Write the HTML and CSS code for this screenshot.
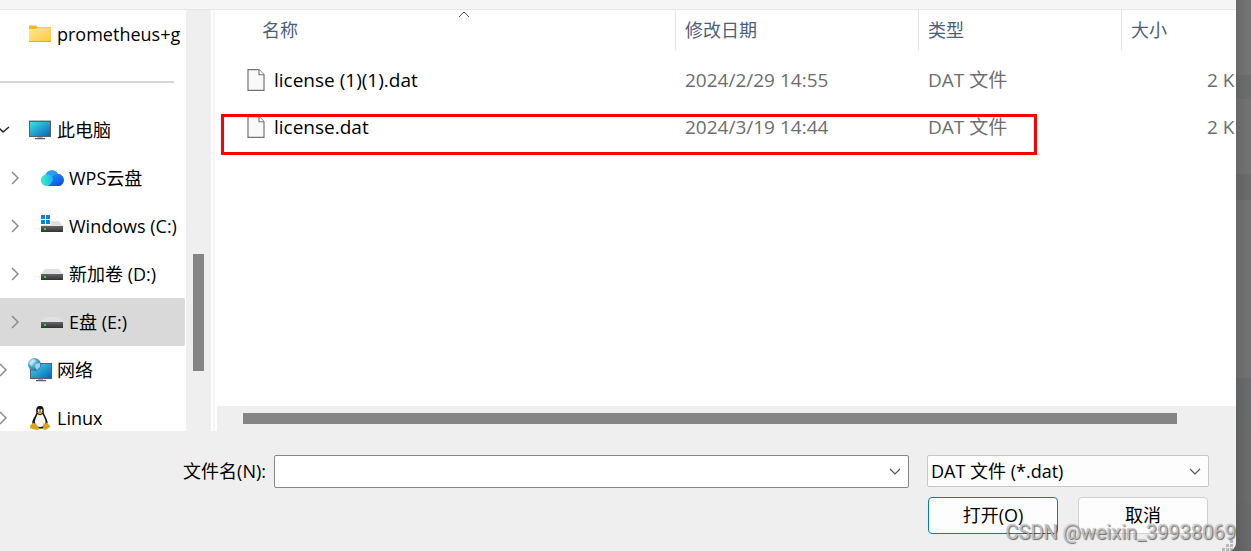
FILE: index.html
```html
<!DOCTYPE html>
<html lang="zh-CN">
<head>
<meta charset="utf-8">
<title>打开</title>
<link rel="stylesheet" href="styles.css">
</head>
<body>
<svg class="defs" aria-hidden="true">
  <defs>
    <linearGradient id="folder" x1="0" y1="0" x2="1" y2="1"><stop offset="0" stop-color="#ffe8a0"/><stop offset="1" stop-color="#ffc83a"/></linearGradient>
    <linearGradient id="screen" x1="0" y1="0" x2="1" y2="1"><stop offset="0" stop-color="#3be0e6"/><stop offset="1" stop-color="#0a63b8"/></linearGradient>
    <linearGradient id="cloud-a" x1="0" y1="0" x2="1" y2="0"><stop offset="0" stop-color="#3df0c0"/><stop offset="1" stop-color="#18b4f5"/></linearGradient>
    <linearGradient id="cloud-b" x1="0" y1="0" x2="1" y2="1"><stop offset="0" stop-color="#1c9cff"/><stop offset="1" stop-color="#0848d8"/></linearGradient>
    <linearGradient id="metal" x1="0" y1="0" x2="0" y2="1"><stop offset="0" stop-color="#666"/><stop offset="1" stop-color="#333"/></linearGradient>
    <radialGradient id="globe" cx=".35" cy=".3" r=".8"><stop offset="0" stop-color="#a8dcf4"/><stop offset=".5" stop-color="#4a9fcc"/><stop offset="1" stop-color="#1d5f96"/></radialGradient>
    <symbol id="chevron" viewBox="0 0 8 14"><path d="M1 1l6 6-6 6" fill="none" stroke="#8a8a8a" stroke-width="1.5"/></symbol>
    <symbol id="down" viewBox="0 0 12 8"><path d="M1 1l5 5 5-5" fill="none" stroke="#555" stroke-width="1.2"/></symbol>
    <symbol id="drive" viewBox="0 0 24 24"><path d="M5 7h14l4 5H1z" fill="#dfe0e3"/><path d="M1 12h22v6H1z" fill="url(#metal)"/><path d="M4 14h2v2H4z" fill="#2be02b"/></symbol>
    <symbol id="file" viewBox="0 0 18 22"><path d="M1 .7h11l5 5v15.600H1z" fill="#f9f9f9" stroke="#747474" stroke-width="1.2"/><path d="M12 .7v5h5" fill="#fff" stroke="#747474" stroke-width="1.100"/></symbol>
  </defs>
</svg>
<div class="screen">
  <main class="dialog">
    <div class="toolbar"></div>
    <div class="browser">
      <nav class="tree">
        <div class="node root"><svg class="icon" viewBox="0 0 24 24"><path d="M1 5V3.500h7L9.500 5H23v15H1z" fill="#f7b51e"/><path d="M1 7h7l2-1.500h13V19.500H1z" fill="url(#folder)"/><path d="M1 19.500h22" stroke="#eaa915"/></svg><span>prometheus+g</span></div>
        <div class="split"><hr></div>
        <div class="node root"><svg class="open" viewBox="0 0 12 8"><path d="M1 2l4 4 6-5" fill="none" stroke="#222" stroke-width="1.500"/></svg><svg class="icon" viewBox="0 0 24 24"><path d="M1 2h22v17H1z" fill="#52616d"/><path d="M1 2h22v1H1z" fill="#b5bec6"/><path d="M2 4h20v14H2z" fill="url(#screen)"/><path d="M9.500 19h5v1h-5z" fill="#aab4bf"/><path d="M7 20h10v1.200H7z" fill="#556"/></svg><span>此电脑</span></div>
        <div class="node"><svg class="chevron"><use href="#chevron"/></svg><svg class="icon" viewBox="0 0 24 24"><path d="M5.500 9.500a6.800 6.800 0 0 1 12.500-1.500 5.800 5.800 0 0 1-.5 12H9z" fill="url(#cloud-b)"/><path d="M5.500 8.800a6.800 6.800 0 0 1 12.500-.8c-4 0-6 3-8 6z" fill="#27a0f8"/><path d="M6.500 8.500c4.500-.5 7 3 6.800 6.500L9.500 19.500l-3 .500A5.700 5.700 0 1 1 6.500 8.500z" fill="url(#cloud-a)"/><path d="M18 8a5.900 5.900 0 0 1-.5 12H8c5.500-1.500 4.500-11 10-12z" fill="url(#cloud-b)"/></svg><span>WPS云盘</span></div>
        <div class="node"><svg class="chevron"><use href="#chevron"/></svg><svg class="icon" viewBox="0 0 24 24"><use href="#drive"/><path d="M0 0h11v11H0z" fill="#fff"/><path d="M1 1h4v4H1zM6 1h4v4H6zM1 6h4v4H1zM6 6h4v4H6z" fill="#0e83d0"/></svg><span>Windows (C:)</span></div>
        <div class="node"><svg class="chevron"><use href="#chevron"/></svg><svg class="icon"><use href="#drive"/></svg><span>新加卷 (D:)</span></div>
        <div class="node selected"><svg class="chevron"><use href="#chevron"/></svg><svg class="icon"><use href="#drive"/></svg><span>E盘 (E:)</span></div>
        <div class="node root"><svg class="chevron edge"><use href="#chevron"/></svg><svg class="icon" viewBox="0 0 24 24"><path d="M2 5h22v16H2z" fill="#52616d"/><path d="M3 6h20v14H3z" fill="url(#screen)"/><path d="M10 21h5v1h-5z" fill="#aab4bf"/><path d="M8 22h10v1.200H8z" fill="#556"/><circle cx="6.500" cy="6.500" r="6.500" fill="url(#globe)"/><path d="M2 3l4-2 2 2-3 2-1 3-3-2zM8 6l4-1v4l-3 3-2-3z" fill="#cbe9f5" opacity=".75"/></svg><span>网络</span></div>
        <div class="node root"><svg class="chevron edge"><use href="#chevron"/></svg><svg class="icon" viewBox="0 0 24 24"><path d="M12 0C8.500 0 8 2.500 8.300 6 8.400 9 5 12 4.300 16c-.5 3 2 6 5 6.500h5.500c3-1 5.500-4 4.700-7-.7-3.500-3.600-6.500-3.800-9.500C16 2.500 15.500 0 12 0z" fill="#151515"/><path d="M9.500 8c1.500 1.500 3.500 1.500 5 0 1 3 3.500 5 3 9-1 3-3 4-5.500 4s-4-1-5-4c-.5-4 2-6 2.500-9z" fill="#f5f5f5"/><ellipse cx="10.700" cy="4.500" rx="1" ry="1.400" fill="#eee"/><ellipse cx="13.400" cy="4.500" rx="1" ry="1.400" fill="#eee"/><path d="M9 6.500l3-1.500 3 1.500-3 2zM5 16.500l3 1.500 3 4c0 2-2 2.300-4 1.500l-4.500-1c-1-.5 0-2-.3-3 0-1 2-1 2.800-3zM19 16l2 3c2 1.500 1 2-.5 3-2 2-5 3-5.500 0l.5-5c1 2 2.500 1 3.500-1z" fill="#dfa414"/></svg><span>Linux</span></div>
      </nav>
      <div class="vscroll"><div class="vthumb"></div></div>
      <div class="divider"></div>
      <section class="files">
        <table>
          <colgroup><col><col class="c-date"><col class="c-type"><col class="c-size"></colgroup>
          <thead><tr>
            <th scope="col"><span class="head first">名称<svg class="sort" viewBox="0 0 12 7"><path d="M1 6l5-5 5 5" fill="none" stroke="#555"/></svg></span></th>
            <th scope="col"><span class="head">修改日期</span></th>
            <th scope="col"><span class="head">类型</span></th>
            <th scope="col"><span class="head last">大小</span></th>
          </tr></thead>
          <tbody>
            <tr><td><span class="name"><svg class="file"><use href="#file"/></svg>license (1)(1).dat</span></td><td>2024/2/29 14:55</td><td>DAT 文件</td><td class="size">2 KB</td></tr>
            <tr><td><span class="name"><svg class="file"><use href="#file"/></svg>license.dat</span></td><td>2024/3/19 14:44</td><td>DAT 文件</td><td class="size">2 KB</td></tr>
          </tbody>
        </table>
        <div class="highlight"></div>
        <div class="hscroll"><div class="hthumb"></div></div>
      </section>
    </div>
    <form class="footer">
      <label for="filename">文件名(N):</label>
      <div class="field"><input id="filename" type="text"><svg class="down"><use href="#down"/></svg></div>
      <div class="field"><select aria-label="文件类型"><option>DAT 文件 (*.dat)</option></select><svg class="down"><use href="#down"/></svg></div>
      <div class="actions"><button type="button" class="primary">打开(O)</button><button type="button">取消</button></div>
      <svg class="grip" viewBox="0 0 12 12"><path d="M8 0h3v3H8zM4 4h3v3H4zM8 4h3v3H8zM0 8h3v3H0zM4 8h3v3H4zM8 8h3v3H8z" fill="#b8b8b8"/></svg>
    </form>
    <div class="watermark">CSDN @weixin_39938069</div>
  </main>
  <div class="backdrop"></div>
</div>
</body>
</html>
```
FILE: styles.css
```css
* { box-sizing: border-box; }
body {
  margin: 0;
  color: #000;
  font: 18px/24px "Open Sans", "Noto Sans CJK SC", sans-serif;
}
svg { display: block; flex: none; }
.defs { position: absolute; width: 0; height: 0; }
.screen { display: flex; height: 100vh; overflow: hidden; background: #5f5f5f; }
.dialog {
  position: relative;
  display: flex;
  flex: 1;
  flex-direction: column;
  min-width: 0;
  overflow: hidden;
  background: #efefef;
  border-radius: 0 0 8px 0;
}
.backdrop {
  width: 15px;
  background: linear-gradient(90deg, #00000018, #0000 12px),
    linear-gradient(#747474 0 75px, #6c6e6d 75px 99px, #727272 99px 174px, #6b6b6b 174px 200px, #727272 200px 378px, #6a6b6c 378px 404px, #686c6b 404px 428px, #6b6b6b 428px 503px, #696969 503px);
}
.toolbar { flex: none; height: 10px; background: #f4f5f7; border-bottom: 1px solid #e5e6e8; }
.browser { display: flex; flex: 1; min-height: 0; background: #fff; }

.tree { flex: none; width: 186px; overflow: hidden; }
.node {
  position: relative;
  display: flex;
  align-items: center;
  gap: 5px;
  height: 48px;
  margin-right: 1px;
  padding-left: 40px;
  border-radius: 0 2px 2px 0;
  white-space: nowrap;
}
.root { padding-left: 28px; margin-right: 0; }
.selected { background: #d9d9d9; }
.icon { width: 24px; height: 24px; }
.chevron { position: absolute; left: 11px; width: 8px; height: 14px; }
.edge { left: -1px; }
.open { position: absolute; left: -2px; width: 12px; height: 8px; }
.split { display: flex; align-items: center; height: 48px; padding-right: 12px; }
.split hr { width: 100%; height: 2px; margin: 0; border: 0; background: #d5d5d5; }
.vscroll { flex: none; width: 25px; padding: 244px 7px 60px; background: #efefef; }
.vthumb { height: 100%; background: #858585; }
.divider { flex: none; width: 6px; border-left: 2px solid #fff; border-right: 2px solid #fff; background: #f5f5f5; }

.files { position: relative; display: flex; flex: 1; flex-direction: column; min-width: 0; }
table { width: 100%; table-layout: fixed; border-collapse: collapse; }
.c-date { width: 243px; }
.c-type { width: 203px; }
.c-size { width: 114px; }
th { height: 46px; padding: 0; vertical-align: top; font-weight: 400; text-align: left; color: #4c607a; }
.head { position: relative; display: flex; align-items: center; height: 40px; padding-left: 9px; border-right: 1px solid #e5e5e5; }
.first { padding-left: 45px; }
.last { border-right: 0; }
.sort { position: absolute; top: 1px; left: 241px; width: 12px; height: 7px; }
td { height: 47px; padding: 0 0 0 9px; overflow: hidden; white-space: nowrap; font-size: 19px; color: #6d6d6d; }
.name { display: flex; align-items: center; gap: 9px; padding-left: 21px; color: #000; }
.file { width: 18px; height: 22px; }
.size { padding-left: 85px; text-overflow: clip; }
.highlight { position: absolute; top: 104px; left: 4px; right: 199px; height: 41px; border: 3px solid #f00; }
.hscroll { height: 25px; margin-top: auto; padding: 7px 59px 7px 26px; background: #efefef; }
.hthumb { height: 11px; background: #858585; }

.footer {
  position: relative;
  flex: none;
  display: grid;
  grid-template-columns: 256px 1fr 282px;
  gap: 9px 18px;
  padding: 24px 27px 17px 0;
}
.footer label { margin-right: -10px; padding-bottom: 2px; align-self: center; text-align: right; }
.field { position: relative; height: 33px; }
input, select, button { font: inherit; color: inherit; background: #fdfdfd; }
input { width: 100%; height: 33px; padding: 0 32px 0 4px; border: 1px solid #858585; border-radius: 2px; background: #fff; }
select { appearance: none; width: 100%; height: 32px; padding: 0 32px 0 3px; border: 1px solid #c8c8c8; border-radius: 2px; }
.down { position: absolute; top: 13px; right: 8px; width: 12px; height: 8px; pointer-events: none; }
.actions { grid-column: 3; display: flex; justify-content: space-between; padding: 0 1px; }
button { width: 130px; height: 37px; padding: 0 0 2px; border: 1px solid #d0d0d0; border-radius: 4px; }
.primary { border-color: #0078d4; }
.grip { position: absolute; right: 2px; bottom: -1px; width: 12px; height: 12px; }
.watermark {
  position: absolute;
  right: 0;
  bottom: 7px;
  color: #e4e4e4b0;
  font: 20px/24px Roboto, sans-serif;
  text-shadow: 1px 1px 1px #0008, 0 0 1px #0006;
  pointer-events: none;
}
```
